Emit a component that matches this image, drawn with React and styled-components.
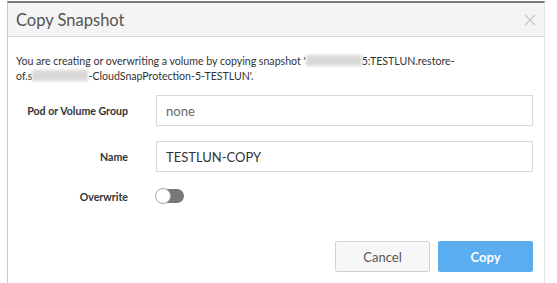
import styled, { createGlobalStyle } from "styled-components";

const Global = createGlobalStyle`
    body {
        margin: 0;
        background: #ffffff;
        font-family: "Lato", "Open Sans", sans-serif;
    }
`;

const Page = styled.div`
    padding: 1px 12px 0 7px;
    height: 282px;
    overflow: hidden;
`;

const Dialog = styled.div`
    border-top: 2px solid #7a7a7a;
    border-left: 1px solid #c8c8c8;
    border-right: 1px solid #e4e4e4;
    background: #fff;
    height: 300px;
`;

const Header = styled.div`
    display: flex;
    align-items: center;
    justify-content: space-between;
    height: 33px;
    padding: 0 8px 0 8px;
    background: #f4f4f4;
    border-bottom: 1px solid #d6d6d6;
`;

const Title = styled.h2`
    margin: 0;
    font-size: 16.5px;
    font-weight: 400;
    color: #555;
`;

const Close = styled.button`
    border: none;
    background: none;
    padding: 0;
    width: 12px;
    height: 12px;
    display: flex;
`;

const Body = styled.div`
    padding: 17px 11px 0 8px;
`;

const Description = styled.p`
    margin: 0 0 11px;
    font-size: 10.6px;
    line-height: 15px;
    color: #333;
`;

const Redacted = styled.span`
    display: inline-block;
    width: ${(p) => p.w}px;
    height: 11px;
    vertical-align: -1px;
    background: #d9d9d9;
    filter: blur(1.5px);
`;

const Form = styled.div`
    display: grid;
    grid-template-columns: 112px 1fr;
    column-gap: 28px;
    row-gap: 15px;
    align-items: center;
`;

const Label = styled.label`
    text-align: right;
    font-size: 10.6px;
    font-weight: 700;
    color: #333;
`;

const Input = styled.input`
    box-sizing: border-box;
    height: 31px;
    width: 100%;
    padding: 0 9px;
    border: 1px solid #d9d9d9;
    font-family: inherit;
    font-size: 13px;
    color: ${(p) => (p.muted ? "#666" : "#333")};
    outline: none;
`;

const Toggle = styled.span`
    position: relative;
    display: inline-block;
    width: 28px;
    height: 14px;
    border-radius: 7px;
    background: #777;
`;

const Knob = styled.span`
    position: absolute;
    left: -1px;
    top: -1px;
    width: 14px;
    height: 14px;
    border-radius: 50%;
    background: #fff;
    border: 1px solid #aaa;
`;

const Footer = styled.div`
    display: flex;
    justify-content: flex-end;
    gap: 8px;
    margin-top: 35px;
`;

const Button = styled.button`
    width: 95px;
    height: 31px;
    border-radius: 2px;
    font-family: inherit;
    font-size: 13px;
    border: 1px solid ${(p) => (p.primary ? "#5aaef0" : "#d2d2d2")};
    background: ${(p) => (p.primary ? "#5aaef0" : "#f7f7f7")};
    color: ${(p) => (p.primary ? "#fff" : "#555")};
    font-weight: ${(p) => (p.primary ? 700 : 400)};
`;

export default function App() {
    return (
        <Page>
            <Global />
            <Dialog>
                <Header>
                    <Title>Copy Snapshot</Title>
                    <Close aria-label="Close">
                        <svg width="12" height="12" viewBox="0 0 12 12">
                            <path d="M1 1L11 11M11 1L1 11" stroke="#c4c4c4" strokeWidth="1.2" />
                        </svg>
                    </Close>
                </Header>
                <Body>
                    <Description>
                        You are creating or overwriting a volume by copying snapshot '<Redacted w={56} />5:TESTLUN.restore-
                        <br />
                        of.s<Redacted w={56} />-CloudSnapProtection-5-TESTLUN'.
                    </Description>
                    <Form>
                        <Label>Pod or Volume Group</Label>
                        <Input muted defaultValue="none" />
                        <Label>Name</Label>
                        <Input defaultValue="TESTLUN-COPY" />
                        <Label>Overwrite</Label>
                        <div>
                            <Toggle>
                                <Knob />
                            </Toggle>
                        </div>
                    </Form>
                    <Footer>
                        <Button>Cancel</Button>
                        <Button primary>Copy</Button>
                    </Footer>
                </Body>
            </Dialog>
        </Page>
    );
}
